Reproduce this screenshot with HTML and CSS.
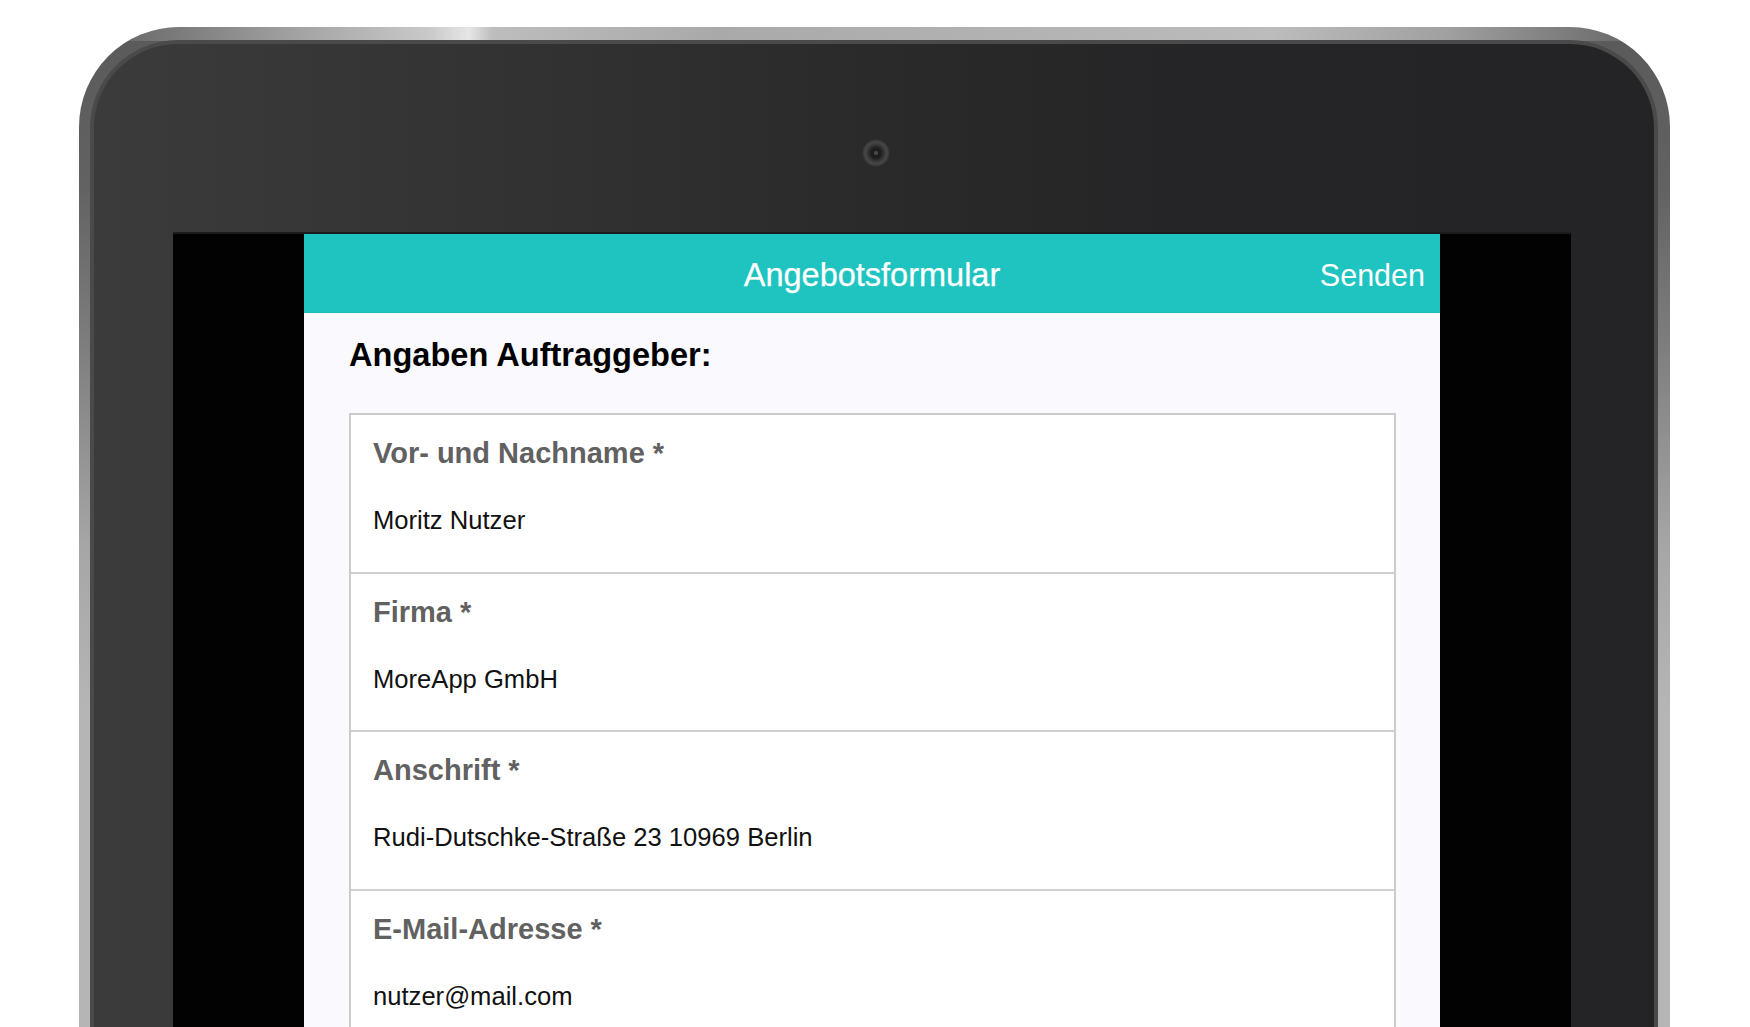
FILE: index.html
```html
<!DOCTYPE html>
<html lang="de">
<head>
<meta charset="utf-8">
<title>Angebotsformular</title>
<link rel="stylesheet" href="styles.css">
</head>
<body>
<div class="stage">
  <div class="device">
    <div class="face">
      <div class="camera"></div>
      <div class="screen">
        <div class="app">
          <header class="app-bar">
            <span class="app-spacer"></span>
            <h1 class="app-title">Angebotsformular</h1>
            <span class="app-action">Senden</span>
          </header>
          <main class="content">
            <h2 class="section-title">Angaben Auftraggeber:</h2>
            <div class="card">
              <div class="field">
                <div class="field-label">Vor- und Nachname *</div>
                <div class="field-value">Moritz Nutzer</div>
              </div>
              <div class="field">
                <div class="field-label">Firma *</div>
                <div class="field-value">MoreApp GmbH</div>
              </div>
              <div class="field">
                <div class="field-label">Anschrift *</div>
                <div class="field-value">Rudi-Dutschke-Straße 23 10969 Berlin</div>
              </div>
              <div class="field">
                <div class="field-label">E-Mail-Adresse *</div>
                <div class="field-value">nutzer@mail.com</div>
              </div>
            </div>
          </main>
        </div>
      </div>
    </div>
  </div>
</div>
</body>
</html>
```

FILE: styles.css
```css
html, body {
  margin: 0;
  padding: 0;
}

body {
  background: #ffffff;
  height: 1027px;
  overflow: hidden;
  font-family: "Liberation Sans", Arial, "Helvetica Neue", sans-serif;
}

.stage {
  padding: 27px 80px 0 79px;
}

.device {
  box-sizing: border-box;
  height: 1150px;
  padding: 13px 12px 0 11px;
  border-radius: 100px 100px 0 0;
  background:
    linear-gradient(to right, #5e5e5e 0%, #7a7a7a 6%, #a4a4a4 14%, #c9c9c9 22%, #e6e6e6 24.5%, #bdbdbd 26%, #a9a9a9 40%, #b3b3b3 60%, #bcbcbc 75%, #a0a0a0 86%, #7a7a7a 94%, #5e5e5e 100%) top / 100% 14px no-repeat,
    linear-gradient(to bottom, #5a5a5a 0px, #626262 160px, #7e7e7e 320px, #a6a6a6 520px, #b5b5b5 680px, #b5b5b5 100%);
}

.face {
  box-sizing: border-box;
  height: 100%;
  border: 4px solid #4a4a4a;
  border-bottom: 0;
  border-radius: 88px 88px 0 0;
  padding: 0 83px 0 79px;
  background: linear-gradient(to right, #3b3b3b 0%, #333333 25%, #2a2a2a 50%, #252527 70%, #242426 100%);
  display: flex;
  flex-direction: column;
  align-items: center;
}

.camera {
  width: 28px;
  height: 28px;
  margin-top: 95px;
  margin-left: 8px;
  border-radius: 50%;
  background: radial-gradient(circle, #4a4a4a 0 1.5px, #1d1d1d 2.5px 5px, #262626 6px, #3c3c3c 9px, #474747 11px, #363636 13px, #2a2a2a 14px);
}

.screen {
  width: 100%;
  flex: 1;
  margin-top: 67px;
  background: #020203;
  display: flex;
  justify-content: center;
  box-shadow: 0 -2px 0 #1c1c1d;
}

.app {
  width: 1136px;
  background: #f9f9fe;
}

.app-bar {
  box-sizing: border-box;
  height: 79px;
  padding: 4.5px 15px 0;
  background: #1fc4c1;
  border-bottom: 1px solid #1bbcb9;
  display: grid;
  grid-template-columns: 1fr auto 1fr;
  align-items: center;
  color: #ffffff;
}

.app-title {
  margin: 0;
  font-size: 32.5px;
  font-weight: 400;
  line-height: 40px;
  -webkit-text-stroke: 0.25px #ffffff;
}

.app-action {
  justify-self: end;
  font-size: 30.5px;
  line-height: 40px;
}

.content {
  padding: 21.7px 44px 0 45px;
}

.section-title {
  margin: 0;
  font-size: 32.6px;
  font-weight: 700;
  line-height: 40px;
  color: #000000;
}

.card {
  margin-top: 38.3px;
  background: #ffffff;
  border: 2px solid #cbcbcb;
}

.field {
  padding: 20px 22px 35.6px;
}

.field + .field {
  border-top: 2px solid #d0d0d0;
}

.field-label {
  font-size: 29px;
  font-weight: 700;
  line-height: 36px;
  color: #616161;
}

.field-value {
  margin-top: 33px;
  font-size: 25.6px;
  line-height: 32px;
  color: #111111;
}
```
